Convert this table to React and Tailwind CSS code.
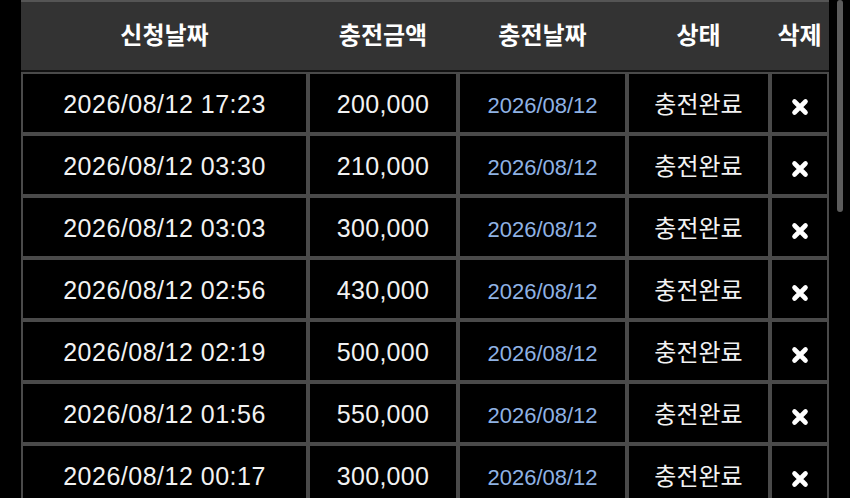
const rows = [
  { requested: "2026/08/12 17:23", amount: "200,000" },
  { requested: "2026/08/12 03:30", amount: "210,000" },
  { requested: "2026/08/12 03:03", amount: "300,000" },
  { requested: "2026/08/12 02:56", amount: "430,000" },
  { requested: "2026/08/12 02:19", amount: "500,000" },
  { requested: "2026/08/12 01:56", amount: "550,000" },
  { requested: "2026/08/12 00:17", amount: "300,000" },
];

const DeleteIcon = () => (
  <svg width="18" height="18" viewBox="0 0 18 18" className="mx-auto mt-[5px]">
    <path d="M3.5 3.5 L14.5 14.5 M14.5 3.5 L3.5 14.5" stroke="#fff" strokeWidth="4.6" strokeLinecap="round" fill="none" />
  </svg>
);

const headCell = "h-[72px] bg-[#333333] border-t-2 border-t-[#555555] border-b-2 border-b-[#111111] text-center text-[24px] font-bold text-white p-0";
const bodyCell = "h-[62px] border-2 border-[#4a4a4a] bg-black text-center px-0 pb-0 pt-[3px]";

const App = () => {
  return (
    <div
      className="relative w-[850px] h-[498px] bg-black overflow-hidden"
      style={{ fontFamily: '"Liberation Sans", "Noto Sans CJK KR", sans-serif' }}
    >
      <table className="ml-[21px] w-[808px] table-fixed border-separate border-spacing-0">
        <colgroup>
          <col className="w-[287px]" />
          <col className="w-[150px]" />
          <col className="w-[169px]" />
          <col className="w-[143px]" />
          <col className="w-[59px]" />
        </colgroup>
        <thead>
          <tr>
            <th className={headCell}>신청날짜</th>
            <th className={headCell}>충전금액</th>
            <th className={headCell}>충전날짜</th>
            <th className={headCell}>상태</th>
            <th className={headCell}>삭제</th>
          </tr>
        </thead>
        <tbody>
          {rows.map((row, i) => (
            <tr key={i}>
              <td className={`${bodyCell} text-[25px] tracking-[0.5px] text-[#f2f2f2]`}>{row.requested}</td>
              <td className={`${bodyCell} text-[25px] tracking-[0.3px] text-[#f2f2f2]`}>{row.amount}</td>
              <td className={`${bodyCell} text-[22px] text-[#8fb2e4]`}>
                <span className="inline-block mt-[2px]">2026/08/12</span>
              </td>
              <td className={`${bodyCell} text-[24px] text-[#f2f2f2]`}>충전완료</td>
              <td className={bodyCell}>
                <DeleteIcon />
              </td>
            </tr>
          ))}
        </tbody>
      </table>

      {/* scrollbar */}
      <div className="absolute left-[837px] top-0 w-[6px] h-[212px] rounded-full bg-[#5c5c5c]" />
    </div>
  );
};

export default App;
